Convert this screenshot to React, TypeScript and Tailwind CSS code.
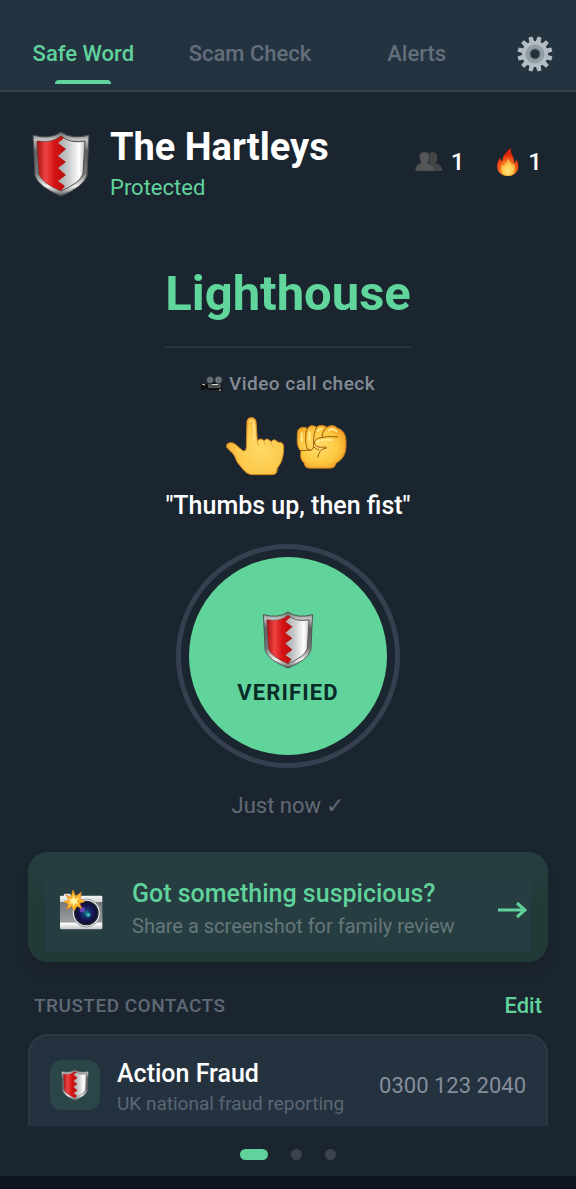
import React, { useId, useState } from 'react';

type TabType = 'safeword' | 'scam' | 'alerts';

const Shield: React.FC<{ className?: string }> = ({ className }) => {
  const id = useId();
  return (
    <svg viewBox="0 0 58 66" className={className} aria-hidden="true">
      <defs>
        <linearGradient id={`${id}rim`} x1="0" y1="0" x2="0" y2="1">
          <stop offset="0" stopColor="#5c5c5c" />
          <stop offset="0.12" stopColor="#c4c4c4" />
          <stop offset="0.3" stopColor="#5f6162" />
          <stop offset="0.65" stopColor="#777" />
          <stop offset="0.85" stopColor="#f2f2f2" />
          <stop offset="1" stopColor="#505050" />
        </linearGradient>
        <linearGradient id={`${id}red`}>
          <stop offset="0" stopColor="#a90f10" />
          <stop offset="0.3" stopColor="#f04444" />
          <stop offset="0.6" stopColor="#d61414" />
          <stop offset="1" stopColor="#b80d0d" />
        </linearGradient>
        <linearGradient id={`${id}silver`}>
          <stop offset="0.4" stopColor="#9fa2a4" />
          <stop offset="0.65" stopColor="#c9cacb" />
          <stop offset="0.88" stopColor="#fff" />
          <stop offset="1" stopColor="#bdbdbd" />
        </linearGradient>
      </defs>
      <path d="M1 4Q18 9 29 1Q40 9 57 4L55 45Q51 56 29 65Q7 56 3 45Z" fill={`url(#${id}rim)`} stroke="#4a4d50" />
      <path d="M5 10Q19 13 29 5Q39 13 53 10L51 43Q48 52 29 60Q10 52 7 43Z" fill={`url(#${id}silver)`} stroke="#4e4e4e" />
      <path d="M5 10Q19 13 29 5L32 7L26 12L34 18L26 25L34 31L26 37L34 44L26 50L33 55L29 60Q10 52 7 43Z" fill={`url(#${id}red)`} />
    </svg>
  );
};

const Gear: React.FC = () => (
  <svg viewBox="0 0 36 36" className="size-9" aria-hidden="true">
    <g fill="#b4bdc4">
      {[0, 30, 60, 90, 120, 150].map((angle) => (
        <path key={angle} d="M15.5 6L16 .5H20L20.5 6V30L20 35.5H16L15.5 30Z" transform={`rotate(${angle + 15} 18 18)`} />
      ))}
      <circle cx="18" cy="18" r="13" />
    </g>
    <circle cx="18" cy="18" r="7.5" fill="#7c8992" stroke="#929da4" strokeWidth="4" />
    <circle cx="18" cy="18" r="5" fill="#25323e" stroke="#68747e" />
  </svg>
);

const People: React.FC = () => (
  <svg viewBox="0 0 27 20" className="h-5 w-7" aria-hidden="true">
    <path d="M14 1C18-1 22 1 22 5Q22 9 20 11Q26 12 27 19H14Z" fill="#434546" />
    <path d="M0 19Q0 12 6 11Q4 8 4 5Q4 0 9 0T14 5Q14 9 12 11Q18 12 19 19Z" fill="#545556" stroke="#35383a" strokeWidth=".6" />
  </svg>
);

const Flame: React.FC = () => (
  <svg viewBox="0 0 24 29" className="h-7 w-6" aria-hidden="true">
    <defs>
      <radialGradient id="flame" cx=".5" cy=".83" r=".72">
        <stop offset="0" stopColor="#fff3a5" />
        <stop offset=".28" stopColor="#ffbd38" />
        <stop offset=".5" stopColor="#f6701c" />
        <stop offset=".85" stopColor="#df220d" />
      </radialGradient>
    </defs>
    <path d="M15 0C11 3 6 8 6 14Q4 13 4 10C0 15 0 20 2 24Q5 29 12 29T22 23Q24 18 21 12Q20 15 18 16C20 10 14 7 15 0Z" fill="url(#flame)" />
    <path d="M12 11Q14 15 16 17L18 16Q20 21 18 25Q12 30 6 25Q4 21 6 17L8 19Q11 16 12 11Z" fill="#ffdc65" opacity=".6" />
  </svg>
);

const MovieCamera: React.FC = () => (
  <svg viewBox="0 0 22 16" className="h-4 w-[22px]" aria-hidden="true">
    <path d="M0 6L6 9V6H21V14H7L5 12L0 15Z" fill="#0e1011" />
    <circle cx="9" cy="4" r="3.3" fill="#777d80" stroke="#3e464a" />
    <circle cx="17.5" cy="4" r="3.5" fill="#777d80" stroke="#3e464a" />
    <path d="M9 2V6M7 4H11M17.5 2V6M15.5 4H19.5" stroke="#50575a" strokeWidth=".8" />
    <path d="M7 8H20V12H7Z" fill="#4c5153" />
    <path d="M11 8.5H17M1 8L4 9M18 14H20" stroke="#e0ddd0" />
  </svg>
);

const PointUp: React.FC = () => (
  <svg viewBox="225 165 180 180" className="size-15" aria-hidden="true">
    <defs>
      <radialGradient id="point" cx=".6" cy=".55" r=".65">
        <stop offset="0" stopColor="#ffd966" />
        <stop offset=".65" stopColor="#fcc94b" />
        <stop offset="1" stopColor="#f1a62d" />
      </radialGradient>
    </defs>
    <path
      d="M291 180C293 166 316 166 318 181L322 239Q333 229 342 239Q352 228 363 242Q374 230 384 244Q400 241 401 258C401 282 397 304 382 321L380 334Q376 341 367 341H304C286 338 280 325 269 313C257 301 258 288 248 277L231 260C224 246 244 240 256 250L278 269Q288 273 289 259Z"
      fill="url(#point)"
      stroke="#d38521"
      strokeWidth="3"
    />
    <path d="M322 238Q321 250 328 255M342 239Q342 251 350 254M363 242Q363 253 371 256" fill="none" stroke="#d9942c" strokeWidth="2" />
    <path d="M299 183Q305 173 311 183L313 240" fill="none" stroke="#ffe895" strokeWidth="4" strokeLinecap="round" />
  </svg>
);

const Fist: React.FC = () => (
  <svg viewBox="435 190 156 141" className="h-12 w-13" aria-hidden="true">
    <defs>
      <radialGradient id="fist" cx=".45" cy=".5" r=".62">
        <stop offset="0" stopColor="#ffdc69" />
        <stop offset=".6" stopColor="#fdca42" />
        <stop offset="1" stopColor="#f09b24" />
      </radialGradient>
    </defs>
    <path
      d="M442 223C441 207 458 199 472 208Q482 193 500 204Q512 193 531 204Q550 193 563 207C582 213 589 230 588 254C589 278 583 299 558 312L554 322Q548 328 537 327H478Q464 327 462 311C450 301 451 288 453 276C438 262 442 241 442 223Z"
      fill="url(#fist)"
      stroke="#c07a1c"
      strokeWidth="3"
    />
    <path
      d="M472 208C463 225 467 258 472 270M453 274Q470 275 480 272M500 204C490 220 490 251 491 263Q485 281 472 269M531 204Q518 212 516 232M491 263Q499 271 506 272M529 267Q512 269 508 281Q504 287 504 294"
      fill="none"
      stroke="#9b5912"
      strokeWidth="3"
      strokeLinecap="round"
    />
    <path
      d="M562 233Q532 229 505 237C486 245 493 263 510 264H529"
      fill="none"
      stroke="#9b5912"
      strokeWidth="3"
      strokeLinecap="round"
    />
    <path d="M455 222V246M478 219V244M503 216Q509 207 516 208M536 214Q546 205 560 216M500 249Q513 239 547 243" fill="none" stroke="#ffed9b" strokeWidth="5" strokeLinecap="round" />
  </svg>
);

const Camera: React.FC = () => (
  <svg viewBox="114 138 138 126" className="h-[42px] w-[46px] shrink-0" aria-hidden="true">
    <defs>
      <linearGradient id="body" x1="0" y1="0" x2="0" y2="1">
        <stop offset="0" stopColor="#f4f5f5" />
        <stop offset=".18" stopColor="#d3d5d6" />
        <stop offset=".2" stopColor="#74787a" />
        <stop offset=".78" stopColor="#9b9d9f" />
        <stop offset=".82" stopColor="#fff" />
        <stop offset="1" stopColor="#c0c3c5" />
      </linearGradient>
      <radialGradient id="lens">
        <stop offset="0" stopColor="#168490" />
        <stop offset=".35" stopColor="#162b6a" />
        <stop offset=".75" stopColor="#151047" />
        <stop offset="1" stopColor="#081024" />
      </radialGradient>
    </defs>
    <rect x="132" y="152" width="20" height="12" rx="3" fill="#ddd" />
    <rect x="120" y="158" width="127" height="101" rx="4" fill="url(#body)" />
    <circle cx="199" cy="210" r="42" fill="#e7e9ec" stroke="#747b81" strokeWidth="2" />
    <circle cx="199" cy="210" r="35" fill="url(#lens)" stroke="#242932" strokeWidth="4" />
    <circle cx="187" cy="200" r="8" fill="#6742b2" />
    <circle cx="205" cy="216" r="6" fill="#36b8b5" />
    <path
      d="M159 141L167 160L184 148L181 166L194 176L179 181L185 196L170 190L163 204L155 190L140 199L145 183L132 177L147 171L138 156L153 163Z"
      fill="#ffb52e"
      stroke="#df8618"
      strokeWidth="2"
    />
    <path d="M160 156L165 169L177 165L169 176L176 184L165 181L161 191L157 180L147 184L153 175L146 168L157 169Z" fill="#fff0a2" />
  </svg>
);

const tabs: { id: TabType; name: string }[] = [
  { id: 'safeword', name: 'Safe Word' },
  { id: 'scam', name: 'Scam Check' },
  { id: 'alerts', name: 'Alerts' },
];

export default function App() {
  const [activeTab, setActiveTab] = useState<TabType>('safeword');

  return (
    <div className="flex h-screen flex-col bg-[#1b252f] font-['Roboto',sans-serif] text-white">
      <header className="flex shrink-0 border-b-2 border-[#33404c] bg-[#243340] pt-6">
        <nav className="grid flex-1 grid-cols-3">
          {tabs.map((tab) => (
            <button
              key={tab.id}
              onClick={() => setActiveTab(tab.id)}
              className={`relative h-[66px] pb-1.5 text-[22px] leading-7 font-medium ${
                activeTab === tab.id ? 'text-[#60d29b]' : 'text-[#636e7b]'
              }`}
            >
              {tab.name}
              {activeTab === tab.id && (
                <span className="absolute bottom-1.5 left-1/2 h-1 w-14 -translate-x-1/2 rounded-t-sm bg-[#60d29b]" />
              )}
            </button>
          ))}
        </nav>
        <button aria-label="Settings" className="flex w-[76px] items-center pb-1.5 pl-[17px]">
          <Gear />
        </button>
      </header>

      <main className="flex-1 overflow-y-auto px-7 [scrollbar-width:none]">
        {/* Family summary */}
        <section className="flex items-center gap-5 pt-[34px] pr-1.5 pl-1">
          <Shield className="h-[66px] w-[58px] shrink-0" />
          <div className="flex-1">
            <h1 className="text-[38px] leading-[42px] font-bold">The Hartleys</h1>
            <p className="mt-1.5 text-[22px] leading-7 text-[#60d29b]">Protected</p>
          </div>
          <div className="flex items-center gap-8 pb-1 text-2xl font-medium">
            <span className="flex items-center gap-2"><People />1</span>
            <span className="flex items-center gap-2"><Flame />1</span>
          </div>
        </section>

        {/* Current safe word and video gesture */}
        <section className="mx-auto mt-[62px] flex w-fit flex-col items-center">
          <h2 className="text-[49px] leading-[60px] font-bold text-[#60d69c]">Lighthouse</h2>
          <div className="mt-[22px] h-0.5 w-full bg-[#2a343f]" />
          <p className="mt-[22px] flex items-center gap-1.5 text-[19px] leading-7 font-medium tracking-wide text-[#848b96]">
            <MovieCamera />
            Video call check
          </p>
          <div className="mt-[18px] flex items-center gap-2.5 pr-1">
            <PointUp />
            <Fist />
          </div>
          <p className="mt-3 text-[25px] leading-9 font-medium">"Thumbs up, then fist"</p>
        </section>

        <button className="mx-auto mt-5 flex size-56 rounded-full border-[5px] border-[#363f50] p-2">
          <span className="flex size-full flex-col items-center justify-center rounded-full bg-[#60d49b] pt-2">
            <Shield className="h-[58px] w-[52px]" />
            <span className="mt-2 text-[22px] leading-8 font-bold tracking-wider text-[#0a2c29]">VERIFIED</span>
          </span>
        </button>
        <p className="mt-6 text-center text-[22px] leading-7 text-[#636a75]">Just now ✓</p>

        <button className="mt-8 w-full rounded-[20px] bg-linear-to-b from-[#253e40] via-[#223a37] to-[#223a37] px-[17px] pt-7 pb-2.5 text-left shadow-lg">
          <span className="flex items-center bg-[#263d41] pr-1 pb-3 pl-[13px]">
            <Camera />
            <span className="ml-7 flex-1">
              <span className="block text-[25px] leading-7 font-medium text-[#60d29b]">Got something suspicious?</span>
              <span className="mt-1 block text-xl leading-7 text-[#66777b]">Share a screenshot for family review</span>
            </span>
            <svg viewBox="0 0 30 18" className="h-[18px] w-[30px]" fill="none" stroke="#60d29b" strokeWidth="3" aria-hidden="true">
              <path d="M1 9H28M20 2L28 9L20 16" />
            </svg>
          </span>
        </button>

        {/* Trusted contacts */}
        <section className="mt-7">
          <div className="flex items-center justify-between px-1.5">
            <h2 className="text-[19px] leading-8 font-medium tracking-wide text-[#5f6975]">TRUSTED CONTACTS</h2>
            <button className="text-[22px] leading-8 font-medium text-[#60d29b]">Edit</button>
          </div>
          <div className="mt-3 flex items-start rounded-[20px] border-2 border-[#2d3945] bg-[#243240] px-5 py-6">
            <div className="flex size-[50px] shrink-0 items-center justify-center rounded-xl bg-[#2a4649]">
              <Shield className="h-8 w-7" />
            </div>
            <div className="ml-[17px] flex-1">
              <h3 className="text-[25px] leading-7 font-medium">Action Fraud</h3>
              <p className="text-[19px] leading-8 text-[#5b6672]">UK national fraud reporting</p>
            </div>
            <a href="tel:03001232040" className="text-[22px] leading-[52px] text-[#858e99]">0300 123 2040</a>
          </div>
        </section>
      </main>

      <footer className="shrink-0 border-b-[13px] border-[#10161f] bg-[#1b252f]">
        <div className="flex h-[50px] items-center justify-center gap-[23px] pt-1.5">
          <span className="h-[11px] w-7 rounded-full bg-[#60d29b]" />
          <span className="size-[11px] rounded-full bg-[#3c4350]" />
          <span className="size-[11px] rounded-full bg-[#3c4350]" />
        </div>
      </footer>
    </div>
  );
}
